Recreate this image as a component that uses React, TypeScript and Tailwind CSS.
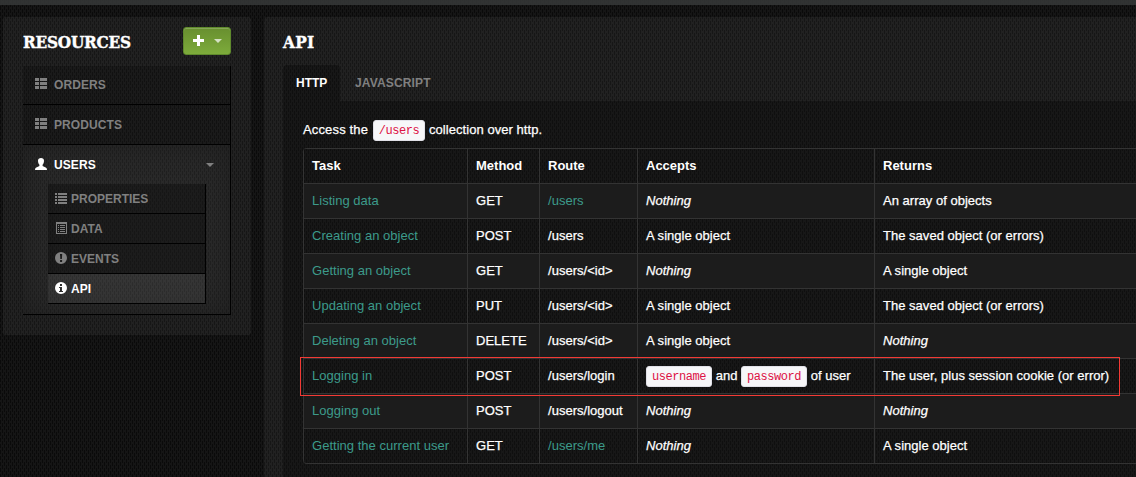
import type { ReactNode } from "react";

const Code = ({ children }: { children: ReactNode }) => (
  <code className="inline-block h-[21px] rounded-[3px] border border-[#e1e1e8] bg-[#f7f7f9] px-[5px] align-middle font-['Liberation_Mono',monospace] text-[12px] leading-[20px] tracking-[-0.45px] text-[#dd1144] [-webkit-text-stroke:0px]">
    {children}
  </code>
);

const Texture = ({ id, dark, light }: { id: string; dark: string; light: string }) => (
  <svg className="pointer-events-none absolute inset-0 h-full w-full" aria-hidden="true">
    <defs>
      <pattern id={id} width="4" height="6" patternUnits="userSpaceOnUse">
        <rect width="4" height="6" fill={light} />
        <rect x="0" y="0" width="1" height="4" fill={dark} />
        <rect x="2" y="3" width="1" height="3" fill={dark} />
        <rect x="2" y="0" width="1" height="1" fill={dark} />
      </pattern>
    </defs>
    <rect width="100%" height="100%" fill={`url(#${id})`} />
  </svg>
);

type IconName = "thlist" | "user" | "list" | "listalt" | "exclaim" | "info";

const Icon = ({ name }: { name: IconName }) => (
  <svg className="mb-0.5 h-3 w-3 shrink-0" viewBox="0 0 12 12" fill="currentColor" shapeRendering={name === "thlist" || name === "list" || name === "listalt" ? "crispEdges" : "auto"}>
    {name === "thlist" && <path d="M0 0h4v3H0zM5 0h7v3H5zM0 4h4v3H0zM5 4h7v3H5zM0 8h4v3H0zM5 8h7v3H5z" />}
    {name === "list" && <path d="M0 1h2v2H0zM3 1h9v2H3zM0 4h2v2H0zM3 4h9v2H3zM0 7h2v2H0zM3 7h9v2H3zM0 10h2v2H0zM3 10h9v2H3z" />}
    {name === "listalt" && <path fillRule="evenodd" d="M1 0h11v12H1zM2 2v9h9V2zM3 3h1v1H3zM5 3h5v1H5zM3 5h1v1H3zM5 5h5v1H5zM3 7h1v1H3zM5 7h5v1H5zM3 9h1v1H3zM5 9h5v1H5z" />}
    {name === "user" && <path d="M6 0C7.8 0 9 1 9 2.8 9 4.8 8.3 6 7.6 6.7V8l3.5 1.7q.9.5.9 2.3H0q0-1.8.9-2.3L4.4 8V6.7C3.7 6 3 4.8 3 2.8 3 1 4.2 0 6 0z" />}
    {name === "exclaim" && <path fillRule="evenodd" d="M6 0a6 6 0 1 0 0 12A6 6 0 0 0 6 0zM5 2h2.2L6.9 7H5.3zM5.1 8h2v2h-2z" />}
    {name === "info" && <path fillRule="evenodd" d="M6 0a6 6 0 1 0 0 12A6 6 0 0 0 6 0zM5 2h2v2H5zM4 5h3v4h1v1H4V9h1V6H4z" />}
  </svg>
);

const nothing = <i>Nothing</i>;
const rows: { task: string; method: string; route: string; link?: boolean; accepts: ReactNode; returns: ReactNode }[] = [
  { task: "Listing data", method: "GET", route: "/users", link: true, accepts: nothing, returns: "An array of objects" },
  { task: "Creating an object", method: "POST", route: "/users", accepts: "A single object", returns: "The saved object (or errors)" },
  { task: "Getting an object", method: "GET", route: "/users/<id>", accepts: nothing, returns: "A single object" },
  { task: "Updating an object", method: "PUT", route: "/users/<id>", accepts: "A single object", returns: "The saved object (or errors)" },
  { task: "Deleting an object", method: "DELETE", route: "/users/<id>", accepts: "A single object", returns: nothing },
  { task: "Logging in", method: "POST", route: "/users/login", accepts: <><Code>username</Code> and <Code>password</Code> of user</>, returns: "The user, plus session cookie (or error)" },
  { task: "Logging out", method: "POST", route: "/users/logout", accepts: nothing, returns: nothing },
  { task: "Getting the current user", method: "GET", route: "/users/me", link: true, accepts: nothing, returns: "A single object" },
];

const subItems: { icon: IconName; label: string }[] = [
  { icon: "list", label: "PROPERTIES" },
  { icon: "listalt", label: "DATA" },
  { icon: "exclaim", label: "EVENTS" },
  { icon: "info", label: "API" },
];

const headingClass = "whitespace-nowrap pt-px font-['DejaVu_Serif_Condensed','DejaVu_Serif',serif] text-[17px] font-bold leading-[28px] [-webkit-text-stroke:0.4px]";
const cols = "grid grid-cols-[164px_72px_98px_237px_270px]";
const cell = "border-l border-[#333] pl-2";

export default function App() {
  return (
    <div className="relative isolate h-[477px] w-[1136px] overflow-hidden bg-[#111] font-['Liberation_Sans',Arial,sans-serif] text-[13px] text-white">
      <div className="absolute inset-0 -z-10">
        <Texture id="weave" dark="#0a0a0a" light="#151515" />
      </div>
      <div className="h-[5px] bg-[#383b3b]/80" />
      <div className="flex gap-[13px] pl-[3px] pt-3">
        <aside className="h-[318px] w-[248px] shrink-0 rounded-[3px] bg-white/5 px-5 pt-[10px]">
          <div className="flex h-7 items-start justify-between">
            <h1 className={`${headingClass} tracking-[-0.2px]`}>RESOURCES</h1>
            <button className="flex h-7 w-12 items-center rounded-[3px] border border-[#5f8a2c] bg-linear-to-b from-[#688f2f] to-[#7dab3b] pl-[9px] shadow-[inset_0_1px_0_rgba(255,255,255,0.2)]">
              <svg className="mb-px h-[11px] w-[11px]" viewBox="0 0 11 11" fill="white"><path d="M4 0h3v4h4v3H7v4H4V7H0V4h4z" /></svg>
              <span className="ml-[10px] border-x-4 border-t-4 border-x-transparent border-t-[#d5e0c4]" />
            </button>
          </div>
          <nav className="mt-[11px] h-[249px] w-[208px] border-b border-r border-black bg-black/20 text-[12px] font-bold text-[#808080]">
            {["ORDERS", "PRODUCTS"].map((label, i) => (
              <div key={label} className={i === 0 ? "flex h-[39px] items-center gap-[7px] border-b border-black pl-3 tracking-[0.1px]" : "flex h-10 items-center gap-[7px] border-b border-black pl-3 tracking-[0.1px]"}>
                <Icon name="thlist" />{label}
              </div>
            ))}
            <div className="h-[169px] bg-white/[0.065] shadow-[inset_0_0_30px_rgba(0,0,0,0.25)]">
              <div className="flex h-[39px] items-center gap-[7px] pl-3 tracking-[0.1px] text-white">
                <Icon name="user" />USERS
                <span className="ml-auto mr-4 border-x-4 border-t-4 border-x-transparent border-t-[#808080]" />
              </div>
              <div className="ml-[25px] w-[158px] border-r border-black">
                {subItems.map((s) => (
                  <div key={s.label} className={s.label === "API" ? "flex h-[30px] items-center gap-1 border-b border-black bg-white/[0.06] pl-[7px] text-white" : "flex h-[30px] items-center gap-1 border-b border-black bg-black/30 pl-[7px]"}>
                    <Icon name={s.icon} />{s.label}
                  </div>
                ))}
              </div>
            </div>
          </nav>
        </aside>
        <main className="h-[480px] w-[900px] shrink-0 rounded-[3px] bg-white/5 pl-[19px] pt-[10px]">
          <h1 className={`${headingClass} -mb-px tracking-[0.3px]`}>API</h1>
          <div className="mt-[10px] flex h-9 text-[12px] font-bold">
            <div className="w-[57px] rounded-t-[4px] bg-black/30 pl-[13px] leading-[36px]">HTTP</div>
            <div className="pl-[15px] leading-[36px] tracking-[0.15px] text-[#808080]">JAVASCRIPT</div>
          </div>
          <div className="h-[400px] bg-black/30 pl-5 pt-[18px] [-webkit-text-stroke:0.25px]">
            <p className="h-[29px] leading-[21px] tracking-[0.05px]"><span className="mr-px tracking-[0.15px]">Access the </span><Code>/users</Code> collection over http.</p>
            <div className="relative w-[841px]">
              <div className="overflow-hidden rounded-[4px] border-b border-[#333]">
                <div className={`${cols} h-[35px] border-t border-[#333] font-bold leading-[34px] [-webkit-text-stroke:0px]`}>
                  {["Task", "Method", "Route", "Accepts", "Returns"].map((h) => <div key={h} className={cell}>{h}</div>)}
                </div>
                {rows.map((r, i) => (
                  <div key={r.task} className={`${cols} h-[35px] border-t border-[#333] leading-[34px] tracking-[0.02px] ${i % 2 === 0 ? "bg-[#1c1c1c]" : ""}`}>
                    <div className={`${cell} text-[#3c9b8b] [-webkit-text-stroke:0px]`}>{r.task}</div>
                    <div className={cell}>{r.method}</div>
                    <div className={r.link ? `${cell} text-[#3c9b8b] [-webkit-text-stroke:0px]` : cell}>{r.route}</div>
                    <div className={cell}>{r.accepts}</div>
                    <div className={cell}>{r.returns}</div>
                  </div>
                ))}
              </div>
              <div className="absolute -left-[3px] top-[209px] h-[39px] w-[820px] border border-[#f33a35]" />
            </div>
          </div>
        </main>
      </div>
    </div>
  );
}
